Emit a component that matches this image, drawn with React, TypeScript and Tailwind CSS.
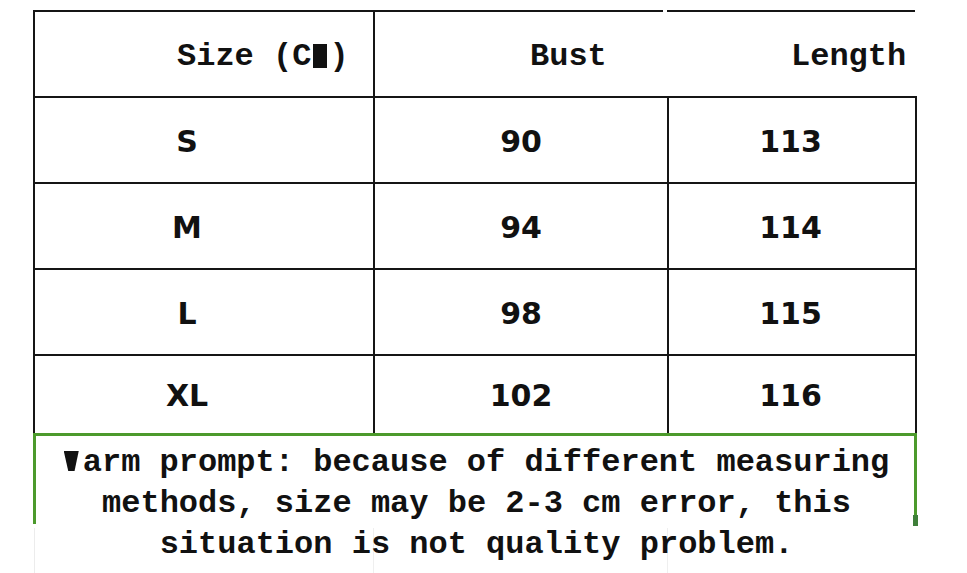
import React from 'react';

const rows = [
  { size: 'S', bust: '90', length: '113' },
  { size: 'M', bust: '94', length: '114' },
  { size: 'L', bust: '98', length: '115' },
  { size: 'XL', bust: '102', length: '116' },
];

const mono = "font-['Liberation_Mono',monospace] font-bold";
const sans = "font-['DejaVu_Sans',sans-serif] font-bold";

export default function App() {
  return (
    <div className="w-[967px] h-[573px] bg-white overflow-hidden text-[#111]">
      <div className="ml-[33px] pt-[10px] w-[884px]">
        {/* header */}
        <div className={`grid grid-cols-[342px_292px_250px] h-[86px] ${mono} text-[32px]`}>
          <div className="border-t-2 border-l-2 border-r-2 border-[#151515] flex items-center pl-[142px] pt-[6px]">
            <span className="whitespace-nowrap">
              Size (C
              <span className="inline-block w-[14px] h-[24px] bg-[#111] text-transparent overflow-hidden align-[-3px] mx-[2px] leading-none">
                M
              </span>
              )
            </span>
          </div>
          <div className="border-t-2 border-[#151515] flex items-center pl-[155px] pt-[6px] mr-[4px]">
            Bust
          </div>
          <div className="border-t-2 border-[#151515] flex items-center pl-[124px] pt-[6px] mr-[2px]">
            Length
          </div>
        </div>

        {/* body */}
        {rows.map((r, i) => (
          <div
            key={r.size}
            className={`grid grid-cols-[338px_294px_248px] ${i === 3 ? 'h-[79px]' : 'h-[86px]'} border-t-2 border-l-2 border-r-2 border-[#151515] ${sans} text-[30px]`}
          >
            <div className="flex items-center justify-center pr-[34px] pt-[2px]">{r.size}</div>
            <div className="flex items-center justify-center border-l-2 border-[#151515] pt-[2px]">{r.bust}</div>
            <div className="flex items-center justify-center border-l-2 border-[#151515] pr-[3px] pt-[2px]">{r.length}</div>
          </div>
        ))}

        {/* warm prompt */}
        <div className="relative border-t-[3px] border-[#4c9a2c] h-[140px]">
          <span className="absolute left-0 top-0 w-[3px] h-[88px] bg-[#4c9a2c]" />
          <span className="absolute right-0 top-0 w-[3px] h-[80px] bg-[#4c9a2c]" />
          <span className="absolute right-[-1px] top-[79px] w-[5px] h-[11px] bg-[#3f7f3a]" />
          <span className="absolute left-[1px] top-[92px] w-px h-[50px] bg-[#ececec]" />
          <span className="absolute left-[340px] top-[92px] w-px h-[50px] bg-[#efefef]" />
          <span className="absolute left-[634px] top-[92px] w-px h-[50px] bg-[#efefef]" />
          <div className={`relative ${mono} text-[32px] leading-[41px] text-center pt-[6px] pl-[3px] whitespace-nowrap`}>
            <span className="inline-block w-[15px] h-[20px] bg-[#111] text-transparent overflow-hidden leading-none align-[0px] mr-[4px] [clip-path:polygon(0_0,100%_0,72%_100%,30%_100%)]">
              W
            </span>
            arm prompt: because of different measuring
            <br />
            methods, size may be 2-3 cm error, this
            <br />
            situation is not quality problem.
          </div>
        </div>
      </div>
    </div>
  );
}
